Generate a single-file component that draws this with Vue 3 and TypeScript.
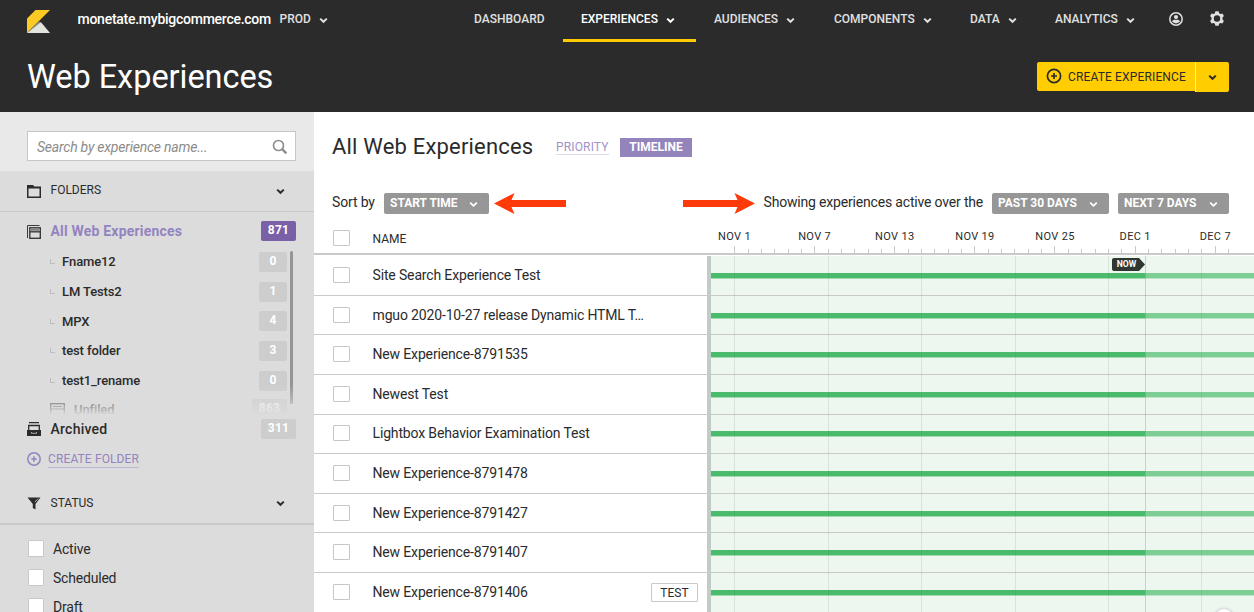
<script setup lang="ts">
interface NavItem { label: string; menu: boolean; active?: boolean }
interface Folder { name: string; count: number }
interface Experience { name: string; tag?: string }

const nav: NavItem[] = [
  { label: 'DASHBOARD', menu: false },
  { label: 'EXPERIENCES', menu: true, active: true },
  { label: 'AUDIENCES', menu: true },
  { label: 'COMPONENTS', menu: true },
  { label: 'DATA', menu: true },
  { label: 'ANALYTICS', menu: true },
]
const folders: Folder[] = [
  { name: 'Fname12', count: 0 },
  { name: 'LM Tests2', count: 1 },
  { name: 'MPX', count: 4 },
  { name: 'test folder', count: 3 },
  { name: 'test1_rename', count: 0 },
]
const statuses: string[] = ['Active', 'Scheduled', 'Draft']
const experiences: Experience[] = [
  { name: 'Site Search Experience Test' },
  { name: 'mguo 2020-10-27 release Dynamic HTML T…' },
  { name: 'New Experience-8791535' },
  { name: 'Newest Test' },
  { name: 'Lightbox Behavior Examination Test' },
  { name: 'New Experience-8791478' },
  { name: 'New Experience-8791427' },
  { name: 'New Experience-8791407' },
  { name: 'New Experience-8791406', tag: 'TEST' },
]
const dates: string[] = ['NOV 1', 'NOV 7', 'NOV 13', 'NOV 19', 'NOV 25', 'DEC 1', 'DEC 7']
const ticks = Array.from({ length: 38 }, (_, i) => ({ x: Math.round(27.2 + i * 13.345), major: i % 6 === 0 }))
const weekLines: number[] = [27, 121, 214, 308, 401, 494]
</script>

<template>
  <div class="page">
    <header class="top">
      <div class="bar">
        <svg class="logo" width="24" height="24" viewBox="0 0 24 24">
          <path d="M0 8.5L8.5 0H23L0 23z" fill="#fbca25" />
          <path d="M0 23L9.6 13.4 12.7 11.6 14 13z" fill="#8f8f8b" />
          <path d="M0 23L14 12.2 23 23z" fill="#e4e4df" />
        </svg>
        <span class="account">monetate.mybigcommerce.com</span>
        <span class="env">PROD</span>
        <svg class="chev env-chev" width="9" height="7" viewBox="0 0 9 7"><path d="M1.2 1.6l3.3 3.2 3.3-3.2" /></svg>
        <nav class="nav">
          <a v-for="item in nav" :key="item.label" class="nav-item" :class="{ active: item.active }">
            <span>{{ item.label }}</span>
            <svg v-if="item.menu" class="chev" width="9" height="7" viewBox="0 0 9 7"><path d="M1.2 1.6l3.3 3.2 3.3-3.2" /></svg>
          </a>
        </nav>
        <svg class="user" width="14" height="14" viewBox="0 0 14 14">
          <circle cx="7" cy="7" r="6.2" fill="none" stroke="#e0e0e0" stroke-width="1.5" />
          <circle cx="7" cy="5" r="2.1" fill="#e0e0e0" />
          <path d="M3 9.6Q3.3 8 5 7.7H9Q10.700 8 11 9.600Q9.500 11.400 7 11.400Q4.500 11.400 3 9.600z" fill="#e0e0e0" />
        </svg>
        <svg class="gear" width="14" height="15" viewBox="0 0 14 15">
          <path fill="#e0e0e0" fill-rule="evenodd" d="M5.400 0.300h3.200l.5 1.900 1.400.8 1.900-.6 1.500 2.700-1.400 1.500v1.800l1.400 1.500-1.500 2.700-1.900-.6-1.400.8-.5 1.900H5.400l-.5-1.900-1.400-.8-1.900.6L.1 9.900l1.400-1.500V6.600L.1 5.100l1.500-2.700 1.900.6 1.400-.8zM7 4.300a3.200 3.200 0 1 0 0 6.400a3.200 3.200 0 1 0 0-6.400z" />
        </svg>
      </div>
      <div class="title-row">
        <h1>Web Experiences</h1>
        <div class="create">
          <button class="create-main">
            <svg width="16" height="16" viewBox="0 0 16 16"><circle cx="8" cy="8" r="6.600" /><path d="M8 5v6M5 8h6" /></svg>
            <span>CREATE EXPERIENCE</span>
          </button>
          <button class="create-more"><svg class="chev" width="9" height="7" viewBox="0 0 9 7"><path d="M1.2 1.6l3.3 3.2 3.3-3.2" /></svg></button>
        </div>
      </div>
    </header>

    <div class="body">
      <aside class="side">
        <div class="search-wrap">
          <div class="search">
            <span>Search by experience name...</span>
            <svg width="16" height="16" viewBox="0 0 16 16" fill="none" stroke="#8f8f8f"><circle cx="6.500" cy="6.500" r="5" stroke-width="1.700" /><path d="M10.200 10.200L14.300 14.300" stroke-width="2.400" /></svg>
          </div>
        </div>
        <div class="section folders-head">
          <svg width="14" height="13" viewBox="0 0 14 13"><path d="M0 0h6l1.500 1.500H14V13H0zM1.500 3.500v8h11v-8z" fill="#2b2b2b" fill-rule="evenodd" /></svg>
          <span>FOLDERS</span>
          <svg class="chev" width="9" height="7" viewBox="0 0 9 7"><path d="M1.2 1.6l3.3 3.2 3.3-3.2" /></svg>
        </div>
        <div class="all-row">
          <svg width="14" height="14" viewBox="0 0 14 14" fill="none" stroke="#3a3a3a"><path d="M.5 13V.5H12.500" /><rect x="2.800" y="2.800" width="10.500" height="10.500" stroke-width="1.400" /><path d="M3 6.800h10" stroke-width="1.400" /><path d="M4 4.900h8" stroke="#777" stroke-width="1.600" /></svg>
          <span>All Web Experiences</span>
          <b class="count purple">871</b>
        </div>
        <div class="folder-list">
          <div v-for="f in folders" :key="f.name" class="folder">
            <i class="elbow"></i>
            <span>{{ f.name }}</span>
            <b class="count">{{ f.count }}</b>
          </div>
          <div class="folder unfiled">
            <svg width="15" height="14" viewBox="0 0 15 14" fill="none" stroke="#444"><rect x=".7" y=".7" width="13.600" height="12.600" stroke-width="1.400" /><path d="M1 6h13M3 3.500h9" /></svg>
            <span>Unfiled</span>
            <b class="count">863</b>
          </div>
          <i class="scroll"></i>
          <i class="fade"></i>
        </div>
        <div class="archived">
          <svg width="14" height="14" viewBox="0 0 14 14"><path d="M2 .5h10M1.700 8V3.500h10.600V8" fill="none" stroke="#2b2b2b" stroke-width="1.300" /><path d="M0 8h14v6H0z" fill="#2b2b2b" /><path d="M4.500 10v1.300h5V10" fill="none" stroke="#aaa" stroke-width="1" /></svg>
          <span>Archived</span>
          <b class="count">311</b>
        </div>
        <div class="create-folder">
          <svg width="14" height="14" viewBox="0 0 14 14"><circle cx="7" cy="7" r="6.200" /><path d="M7 4.300v5.400M4.300 7h5.400" /></svg>
          <span>CREATE FOLDER</span>
        </div>
        <div class="section status-head">
          <svg width="14" height="13" viewBox="0 0 14 13"><path d="M.5.5h13L8.500 7v5.500L5.800 11V7z" fill="#2b2b2b" /><path d="M8 5l3-3.300" stroke="#ddd" stroke-width=".8" /></svg>
          <span>STATUS</span>
          <svg class="chev" width="9" height="7" viewBox="0 0 9 7"><path d="M1.2 1.6l3.3 3.2 3.3-3.2" /></svg>
        </div>
        <div class="statuses">
          <div v-for="s in statuses" :key="s" class="status"><i></i><span>{{ s }}</span></div>
        </div>
      </aside>

      <main class="main">
        <div class="main-title">
          <h2>All Web Experiences</h2>
          <span class="priority">PRIORITY</span>
          <span class="timeline-tab">TIMELINE</span>
        </div>
        <div class="filters">
          <span class="sort">Sort by</span>
          <button class="pill start"><span>START TIME</span><svg class="chev" width="9" height="7" viewBox="0 0 9 7"><path d="M1.2 1.6l3.3 3.2 3.3-3.2" /></svg></button>
          <svg class="arrow left" width="72" height="21" viewBox="0 0 72 21"><path d="M0 10.500L20.500 0 17.500 7H72v7H17.500L20.500 21z" fill="#ff3a0a" /></svg>
          <svg class="arrow right" width="72" height="21" viewBox="0 0 72 21"><path d="M72 10.500L51.500 0 54.500 7H0v7H54.500L51.500 21z" fill="#ff3a0a" /></svg>
          <span class="showing">Showing experiences active over the</span>
          <button class="pill past"><span>PAST 30 DAYS</span><svg class="chev" width="9" height="7" viewBox="0 0 9 7"><path d="M1.2 1.6l3.3 3.2 3.3-3.2" /></svg></button>
          <button class="pill next"><span>NEXT 7 DAYS</span><svg class="chev" width="9" height="7" viewBox="0 0 9 7"><path d="M1.2 1.6l3.3 3.2 3.3-3.2" /></svg></button>
        </div>
        <div class="table-head">
          <div class="name-head"><i class="box"></i><span>NAME</span></div>
          <div class="scale">
            <div class="dates"><span v-for="d in dates" :key="d">{{ d }}</span></div>
            <i v-for="t in ticks" :key="t.x" class="tick" :class="{ major: t.major }" :style="{ left: t.x + 'px' }"></i>
          </div>
        </div>
        <div class="grid">
          <div v-for="e in experiences" :key="e.name" class="row">
            <div class="name-cell">
              <i class="box"></i><span>{{ e.name }}</span><em v-if="e.tag">{{ e.tag }}</em>
            </div>
            <div class="track"><i class="past-bar"></i><i class="future-bar"></i></div>
          </div>
          <i v-for="x in weekLines" :key="x" class="week" :style="{ left: 393 + x + 'px' }"></i>
          <i class="now-line"></i>
          <svg class="now" width="33" height="13" viewBox="0 0 33 13"><path d="M2 0H27L33 6.500 27 13H2Q0 13 0 11V2Q0 0 2 0z" fill="#2e3831" /><text x="4.700" y="9.400" textLength="19.500" lengthAdjust="spacingAndGlyphs">NOW</text></svg>
          <i class="help"></i>
        </div>
      </main>
    </div>
  </div>
</template>

<style>
html, body { margin: 0; overflow: hidden; }
</style>

<style scoped>
* { box-sizing: border-box; }
.page { width: 1254px; height: 612px; overflow: hidden; background: #fff; color: #2b2b2b; font-family: Roboto, "Liberation Sans", sans-serif; font-size: 14px; display: flex; flex-direction: column; }
span, b, em { white-space: nowrap; font-style: normal; }
i { display: block; }
svg { display: block; flex: none; }
button { border: 0; margin: 0; font-family: inherit; color: inherit; }
.chev { fill: none; stroke: currentColor; stroke-width: 2; }
.top { height: 112px; flex: none; background: #2b2b2b; color: #fff; }
.bar { height: 42px; display: flex; align-items: flex-start; padding-left: 27px; color: #e0e0e0; }
.logo { margin-top: 10px; }
.account { width: 194px; margin: 11px 0 0 26.500px; line-height: 16px; font-size: 14px; font-weight: 500; color: #fff; letter-spacing: -.26px; }
.env { margin: 11px 0 0 8px; width: 32px; line-height: 16px; font-size: 12px; font-weight: 500; }
.env-chev { margin: 17px 0 0 7px; }
.nav { display: grid; grid-template-columns: 107px 133px 120px 136px 85px 114px; margin-left: 128.500px; height: 42px; }
.nav-item { display: flex; align-items: flex-start; gap: 8px; padding: 11px 0 0 18px; line-height: 16px; font-size: 12px; font-weight: 500; border-bottom: 3px solid transparent; }
.nav-item .chev { margin-top: 6px; }
.nav-item.active { color: #fff; border-bottom-color: #ffcb00; }
.user { margin: 12px 0 0 18px; }
.gear { margin: 11px 0 0 27px; }
.title-row { height: 70px; display: flex; justify-content: space-between; padding: 0 25px 0 27px; }
h1 { margin: 16px 0 0; line-height: 38px; font-size: 32.500px; font-weight: 400; letter-spacing: -.05px; }
.create { display: flex; margin-top: 20px; color: #2b2b2b; }
.create-main { width: 158px; height: 29px; border-radius: 2px 0 0 2px; background: #ffcd00; padding: 0 0 0 9px; display: flex; align-items: center; gap: 6px; font-size: 12px; letter-spacing: .15px; }
.create-main svg { fill: none; stroke: #2b2b2b; stroke-width: 1.700; margin-top: -1px; }
.create-more { width: 34px; height: 30px; border-left: 1px solid #fff0a0; border-radius: 0 2px 2px 0; background: #ffcd00; padding: 0 0 0 11.500px; }
.body { display: flex; height: 500px; }
.side { width: 314px; flex: none; background: #dcdcdc; overflow: hidden; }
.search-wrap { height: 59px; background: #e9e9e9; padding: 19px 18px 0 27px; }
.search { height: 30px; border: 1px solid #c6c6c6; background: #fff; display: flex; justify-content: space-between; align-items: center; padding: 1px 7px 0 9px; font-size: 14px; color: #8c8c8c; }
.search span { font-style: italic; letter-spacing: -.22px; padding-top: 1px; }
.section { display: flex; align-items: center; padding-left: 27px; font-size: 12px; }
.section span { width: 225px; margin-left: 9.500px; }
.folders-head { height: 41px; padding-bottom: 3px; border-bottom: 1px solid #c8c8c8; }
.folders-head > svg { margin-top: 3px; }
.all-row { height: 37px; display: flex; align-items: center; padding: 1px 18px 0 27px; color: #9384c0; font-size: 14px; font-weight: 700; }
.all-row svg { margin-top: 2px; }
.all-row span { letter-spacing: .19px; }
.all-row span, .archived span { margin-left: 9.500px; flex: 1; }
.archived span { letter-spacing: .25px; }
.count { width: 35px; height: 20px; border-radius: 2px; background: #cdcdcd; color: #fff; font-size: 12px; line-height: 19px; text-align: center; font-weight: 700; letter-spacing: .3px; }
.purple { background: #7a60a6; }
.folder-list { position: relative; height: 166px; overflow: hidden; }
.folder { height: 29.700px; display: flex; align-items: center; padding: 0 27px 0 50px; font-size: 13px; font-weight: 500; letter-spacing: -.12px; }
.folder:first-child { margin-top: -2px; }
.folder span { margin-left: 7px; flex: 1; }
.folder .count { width: 28px; }
.elbow { width: 5px; height: 5px; border-left: 1px solid #bdbdbd; border-bottom: 1px solid #bdbdbd; }
.folder.unfiled { height: 28px; }
.unfiled svg { margin-top: 1px; }
.unfiled span { margin-left: 9px; }
.folder.unfiled .count { width: 35px; }
.scroll { position: absolute; right: 21px; top: 2px; width: 3px; height: 153px; border-radius: 2px; background: #959595; }
.fade { position: absolute; left: 0; right: 0; bottom: 0; height: 30px; background: linear-gradient(rgba(220,220,220,0), rgba(220,220,220,.55) 60%, rgba(220,220,220,.8) 85%, #dcdcdc); }
.archived { height: 28px; display: flex; align-items: center; padding: 0 18px 1px 27px; font-size: 14px; font-weight: 500; }
.archived svg, .archived .count { margin-top: 1px; }
.create-folder { height: 32px; display: flex; align-items: center; gap: 7px; padding: 0 0 0 27px; color: #9384c0; font-size: 12px; }
.create-folder svg { fill: none; stroke: #9384c0; stroke-width: 1.500; }
.create-folder span { line-height: 15px; border-bottom: 1px solid #bdb5d5; margin-top: 2px; letter-spacing: .12px; }
.status-head { height: 50px; padding-top: 8px; border-bottom: 2px solid #c8c8c8; }
.statuses { padding-top: 9px; }
.status { height: 29px; display: flex; align-items: center; padding-left: 28px; font-size: 14px; }
.status i { width: 16px; height: 17px; border: 1px solid #c9c9c9; background: #fff; border-radius: 1px; }
.status span { margin-left: 9px; letter-spacing: -.2px; }
.main { width: 940px; background: #fff; }
.main-title { height: 66px; display: flex; padding-left: 18px; align-items: flex-start; }
h2 { margin: 21px 0 0; width: 224px; font-weight: 400; font-size: 22px; line-height: 28px; white-space: nowrap; letter-spacing: .19px; }
.priority { margin-top: 28px; width: 53px; color: #a193c9; font-size: 12px; line-height: 14px; border-bottom: 1px solid #dedbea; letter-spacing: .15px; }
.timeline-tab { margin: 26px 0 0 11px; width: 72px; height: 19px; background: #9384bc; color: #fff; text-align: center; font-weight: 700; font-size: 12px; line-height: 18px; }
.filters { height: 46px; display: flex; align-items: flex-start; padding: 15px 0 0 18px; line-height: 19px; }
.sort { width: 52px; letter-spacing: -.15px; }
.pill { height: 21px; background: #979797; color: #fff; border-radius: 2px; display: flex; align-items: center; justify-content: space-between; font-size: 12px; font-weight: 700; padding: 0 11.500px 2px 6px; }
.pill .chev { margin-top: 3px; stroke-width: 1.800; }
.start { width: 105px; }
.left { margin-left: 5px; }
.right { margin-left: 117px; }
.showing { width: 228.500px; margin-left: 8.500px; letter-spacing: -.18px; }
.past { width: 117px; }
.next { width: 111px; margin-left: 9px; }
.table-head { height: 31px; display: flex; border-bottom: 2px solid #c9c9c9; }
.name-head { width: 393px; display: flex; padding: 6px 0 0 19px; font-size: 12px; }
.name-head span { margin: 1px 0 0 22.500px; line-height: 17px; }
.box { width: 17px; height: 16px; border: 1px solid #c6c6c6; border-radius: 1px; background: #fff; flex: none; }
.scale { position: relative; width: 547px; }
.dates { display: flex; margin-left: -12.600px; }
.dates span { width: 80.150px; flex: none; text-align: center; font-size: 11px; line-height: 13px; padding-top: 6px; letter-spacing: .33px; }
.tick { position: absolute; width: 1px; height: 4px; bottom: 0; background: #cacaca; }
.tick.major { height: 7px; }
.grid { position: relative; height: 357px; padding-top: 1.300px; }
.row { height: 39.580px; display: flex; border-bottom: 1px solid #cacaca; }
.name-cell { width: 393px; display: flex; align-items: center; padding: 0 9px .9px 19px; font-size: 14px; }
.name-cell span { margin-left: 22.500px; flex: 1; letter-spacing: -.15px; }
.name-cell em { width: 47px; height: 19px; margin-top: 1px; border: 1px solid #c9c9c9; text-align: center; font-size: 12px; line-height: 18px; border-radius: 1px; }
.track { flex: 1; border-left: 4px solid #c0ccc4; background: #edf7f0; display: flex; align-items: center; }
.past-bar { width: 434px; height: 5px; background: #4aba6d; box-shadow: 0 1px #a2dab2; }
.future-bar { flex: 1; height: 5px; background: #7dce95; box-shadow: 0 1px #b9e4c5; }
.week { position: absolute; top: 1px; bottom: 0; width: 1px; background: rgba(86,120,98,.15); }
.now-line { position: absolute; left: 831px; top: 1px; bottom: 0; width: 1px; background: rgba(90,120,100,.28); }
.now { position: absolute; left: 798px; top: 3px; font: 700 8.500px Roboto, sans-serif; fill: #fff; }
.help { position: absolute; left: 900px; top: 354px; width: 20px; height: 20px; border-radius: 50%; background: #fff; box-shadow: 0 0 3px #aaa5b5; }
</style>
